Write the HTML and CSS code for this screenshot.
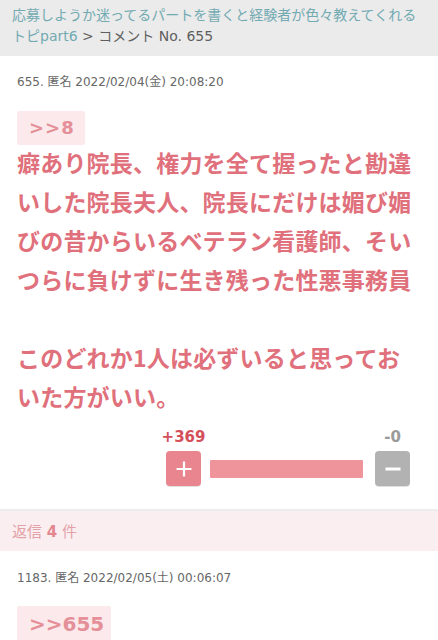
FILE: index.html
```html
<!DOCTYPE html>
<html lang="ja">
<head>
<meta charset="utf-8">
<link rel="stylesheet" href="styles.css">
</head>
<body>
<header class="crumbs">
  <div class="crumb-line"><a class="crumb-link" href="#">応募しようか迷ってるパートを書くと経験者が色々教えてくれる</a></div>
  <div class="crumb-line"><a class="crumb-link" href="#">トピpart6</a><span class="crumb-sep"> &gt; コメント No. 655</span></div>
</header>

<article class="comment">
  <div class="meta">655. 匿名 2022/02/04(金) 20:08:20</div>
  <div class="anchor anchor-sm">&gt;&gt;8</div>
  <p class="body">癖あり院長、権力を全て握ったと勘違いした院長夫人、院長にだけは媚び媚びの昔からいるベテラン看護師、そいつらに負けずに生き残った性悪事務員<br><br>このどれか1人は必ずいると思っておいた方がいい。</p>
  <div class="vote">
    <div class="vote-label plus-label">+369</div>
    <div class="vote-spacer"></div>
    <div class="vote-label minus-label">-0</div>
    <button class="btn btn-plus" aria-label="plus">
      <svg width="18" height="18" viewBox="0 0 18 18"><path d="M9 1.5V16.5M1.5 9H16.5" stroke="#fff" stroke-width="2.2" fill="none"/></svg>
    </button>
    <div class="bar"></div>
    <button class="btn btn-minus" aria-label="minus">
      <svg width="18" height="18" viewBox="0 0 18 18"><path d="M1.5 9H16.5" stroke="#fff" stroke-width="3" fill="none"/></svg>
    </button>
  </div>
</article>

<div class="replies">返信 <b>4</b> 件</div>

<article class="comment comment-2">
  <div class="meta">1183. 匿名 2022/02/05(土) 00:06:07</div>
  <div class="anchor anchor-lg">&gt;&gt;655</div>
</article>
</body>
</html>
```

FILE: styles.css
```css
* { box-sizing: border-box; }
html, body { margin: 0; padding: 0; background: #fff; }
body {
  width: 438px;
  height: 640px;
  overflow: hidden;
  font-family: "DejaVu Sans", "Noto Sans CJK JP", sans-serif;
  color: #555;
}

.crumbs {
  background: #ebebeb;
  padding: 5px 12px 9px;
  font-size: 14px;
  line-height: 21px;
  height: 56px;
}
.crumb-line { white-space: nowrap; }
.crumb-link { color: #72aab2; text-decoration: none; }
.crumb-sep { color: #5f5f5f; }

.comment { padding: 0 17px; }

.meta {
  margin-top: 18px;
  font-size: 12px;
  line-height: 16px;
  color: #666;
}

.anchor {
  display: inline-block;
  background: #fbe9eb;
  color: #e58f99;
  font-weight: bold;
  font-family: "DejaVu Sans", sans-serif;
  border-radius: 2px;
}
.anchor-sm {
  margin-top: 21px;
  height: 34px;
  width: 68px;
  padding-left: 12px;
  font-size: 18px;
  line-height: 34px;
  letter-spacing: 1px;
}
.anchor-lg {
  margin-top: 20px;
  height: 40px;
  width: 94px;
  padding-left: 12px;
  font-size: 20px;
  line-height: 36px;
  letter-spacing: 0;
}

.body {
  margin: -2px 0 0;
  font-family: "Noto Sans CJK JP", sans-serif;
  font-weight: bold;
  font-size: 23px;
  letter-spacing: 0.2px;
  line-height: 39px;
  color: #e0707b;
}

.vote {
  display: grid;
  grid-template-columns: 35px 174px 35px;
  grid-template-rows: 18px 35px;
  row-gap: 5px;
  justify-content: end;
  padding-right: 11px;
  margin-top: 12px;
}
.vote-label {
  display: flex;
  justify-content: center;
  white-space: nowrap;
  font-size: 15px;
  line-height: 18px;
  font-weight: bold;
}
.plus-label { color: #d54f5b; }
.minus-label { color: #9a9a9a; }

.btn {
  width: 35px;
  height: 35px;
  border: 0;
  border-radius: 4px;
  padding: 0;
  display: flex;
  align-items: center;
  justify-content: center;
  box-shadow: 0 1px 0 rgba(0,0,0,0.12);
}
.btn-plus { background: #e8858f; }
.btn-minus { background: #b2b2b2; }

.bar {
  align-self: center;
  height: 18px;
  margin: 0 12px 0 9px;
  background: #f0949c;
  border-radius: 1px;
}

.replies {
  margin-top: 23px;
  border-top: 2px solid #ececec;
  background: #fbeef0;
  height: 42px;
  padding: 0 12px;
  font-size: 15px;
  line-height: 42px;
  color: #e3a2aa;
}
.replies b { color: #e3868f; }

.comment-2 .meta { margin-top: 19px; }
.comment-2 .anchor-lg { margin-top: 20px; }
```
